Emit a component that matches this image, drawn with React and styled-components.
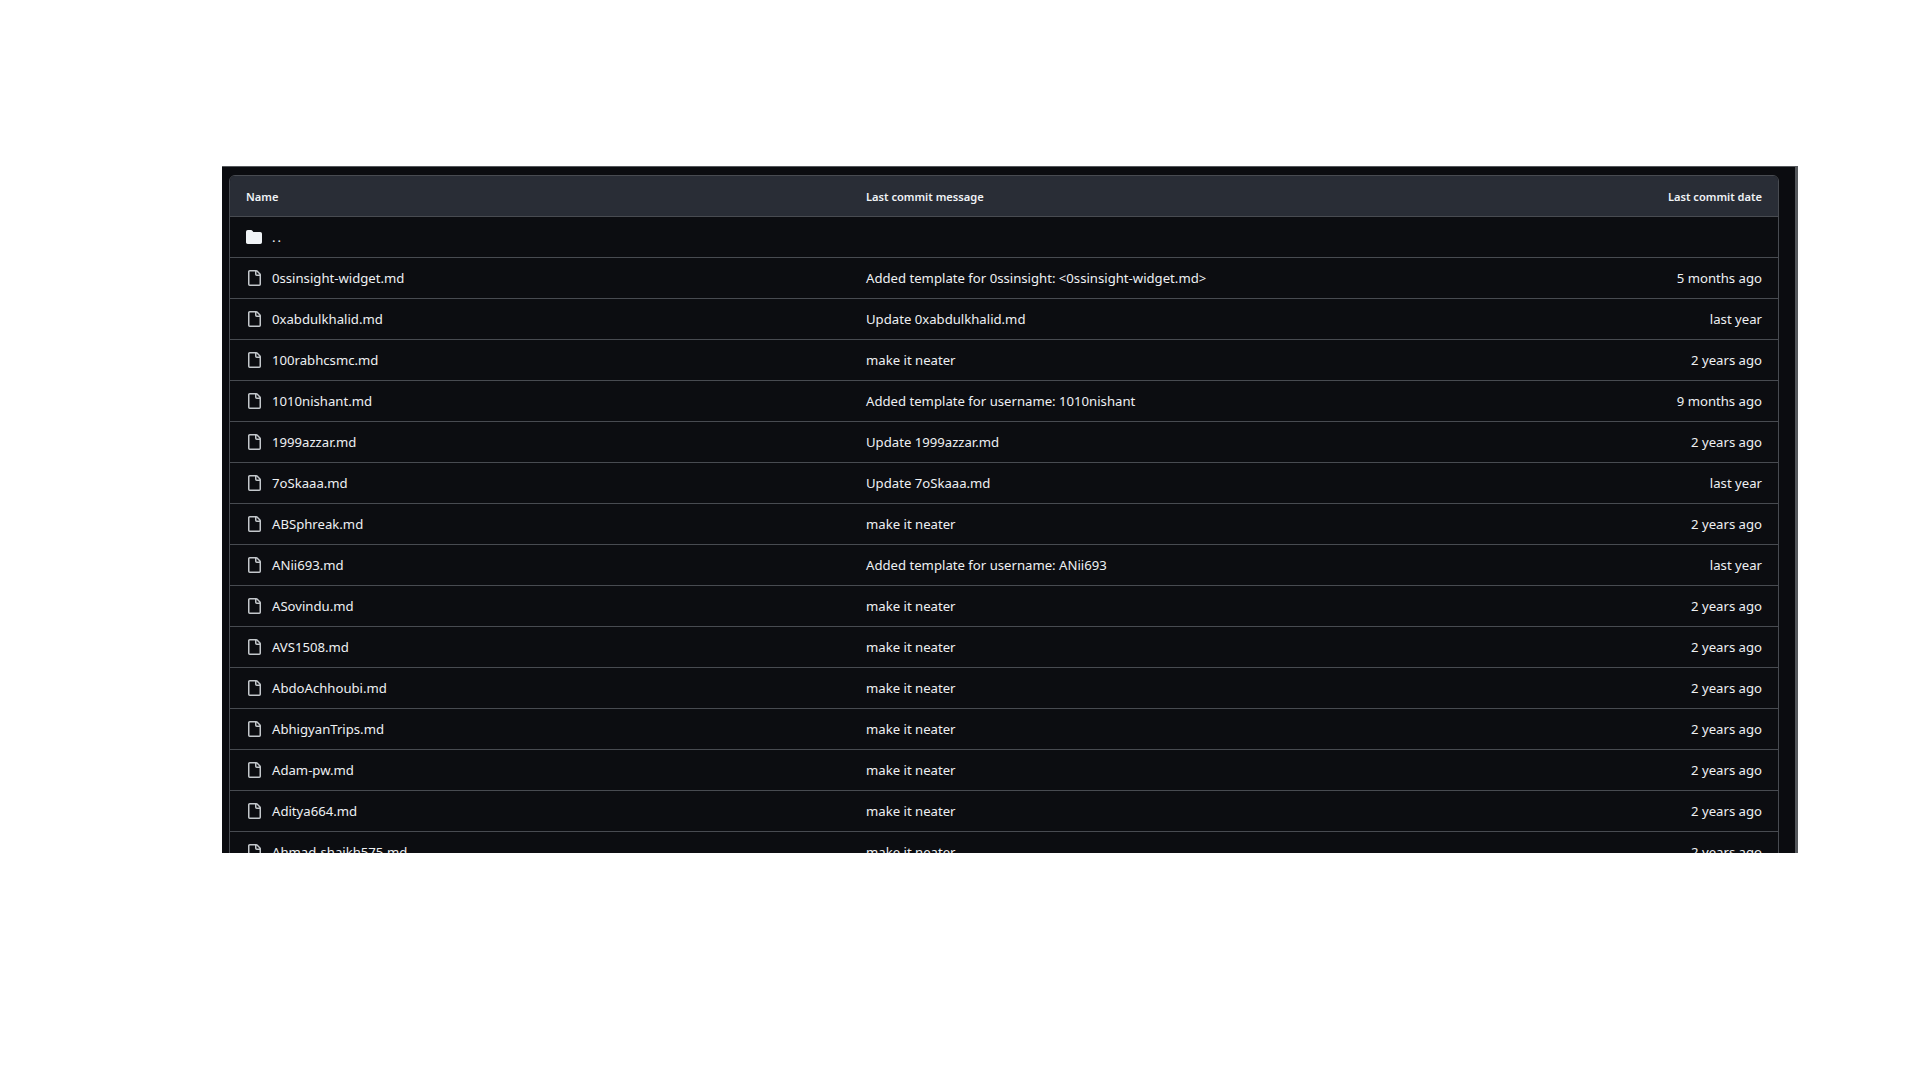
import React from "react";
import styled, { createGlobalStyle } from "styled-components";

const Global = createGlobalStyle`
  html, body { margin: 0; background: #fff; }
  body { font-family: "Noto Sans", "Open Sans", "Liberation Sans", sans-serif; }
`;

const Page = styled.div`
  width: 1920px;
  height: 1080px;
  padding: 166px 0 0 222px;
  box-sizing: border-box;
  overflow: hidden;
`;

const Frame = styled.div`
  width: 1576px;
  height: 687px;
  box-sizing: border-box;
  padding: 8px 16px 0 7px;
  background: #0b0c10;
  border-top: 1px solid #55585c;
  border-right: 3px solid #55585c;
  overflow: hidden;
`;

const Table = styled.div`
  border: 1px solid #484b51;
  border-radius: 6px;
  background: #0c0d11;
  color: #f0f3f6;
`;

const Row = styled.div`
  display: grid;
  grid-template-columns: 620px 1fr 200px;
  align-items: center;
  height: 41px;
  padding: 0 16px;
  box-sizing: border-box;
  border-top: 1px solid #484b51;
  font-size: 13.15px;
  color: #eef0f3;
`;

const HeadRow = styled(Row)`
  height: 40px;
  border-top: 0;
  border-radius: 5px 5px 0 0;
  background: #292d36;
  font-size: 11.1px;
  font-weight: 600;
  color: #f0f3f6;
`;

const NameCell = styled.div`
  display: flex;
  align-items: center;
  gap: 10px;
  white-space: nowrap;
`;

const Message = styled.div`
  white-space: nowrap;
`;

const DateCell = styled.div`
  text-align: right;
  white-space: nowrap;
`;

const Icon = styled.svg`
  width: 16px;
  height: 16px;
  flex: none;
  fill: ${(p) => p.$color};
`;

const UpLabel = styled.span`
  letter-spacing: 2px;
`;

const FileIcon = () => (
  <Icon viewBox="0 0 16 16" $color="#c4c8cc">
    <path d="M2 1.75C2 .784 2.784 0 3.75 0h6.586c.464 0 .909.184 1.237.513l2.914 2.914c.329.328.513.773.513 1.237v9.586A1.75 1.75 0 0 1 13.25 16h-9.5A1.75 1.75 0 0 1 2 14.25Zm1.75-.25a.25.25 0 0 0-.25.25v12.5c0 .138.112.25.25.25h9.5a.25.25 0 0 0 .25-.25V6h-2.75A1.75 1.75 0 0 1 9 4.25V1.5Zm6.75.062V4.25c0 .138.112.25.25.25h2.688l-.011-.013-2.914-2.914-.013-.011Z" />
  </Icon>
);

const FolderIcon = () => (
  <Icon viewBox="0 0 16 16" $color="#f0f3f6">
    <path d="M1.75 1A1.75 1.75 0 0 0 0 2.75v10.5C0 14.216.784 15 1.75 15h12.5A1.75 1.75 0 0 0 16 13.25v-8.5A1.75 1.75 0 0 0 14.25 3H7.5a.25.25 0 0 1-.2-.1l-.9-1.2C6.07 1.26 5.55 1 5 1H1.75Z" />
  </Icon>
);

const neat = "make it neater";
const files = [
  ["0ssinsight-widget.md", "Added template for 0ssinsight: <0ssinsight-widget.md>", "5 months ago"],
  ["0xabdulkhalid.md", "Update 0xabdulkhalid.md", "last year"],
  ["100rabhcsmc.md", neat, "2 years ago"],
  ["1010nishant.md", "Added template for username: 1010nishant", "9 months ago"],
  ["1999azzar.md", "Update 1999azzar.md", "2 years ago"],
  ["7oSkaaa.md", "Update 7oSkaaa.md", "last year"],
  ["ABSphreak.md", neat, "2 years ago"],
  ["ANii693.md", "Added template for username: ANii693", "last year"],
  ["ASovindu.md", neat, "2 years ago"],
  ["AVS1508.md", neat, "2 years ago"],
  ["AbdoAchhoubi.md", neat, "2 years ago"],
  ["AbhigyanTrips.md", neat, "2 years ago"],
  ["Adam-pw.md", neat, "2 years ago"],
  ["Aditya664.md", neat, "2 years ago"],
  ["Ahmad-shaikh575.md", neat, "2 years ago"],
];

export default function App() {
  return (
    <Page>
      <Global />
      <Frame>
        <Table>
          <HeadRow>
            <div>Name</div>
            <Message>Last commit message</Message>
            <DateCell>Last commit date</DateCell>
          </HeadRow>
          <Row>
            <NameCell>
              <FolderIcon />
              <UpLabel>..</UpLabel>
            </NameCell>
          </Row>
          {files.map(([name, msg, date]) => (
            <Row key={name}>
              <NameCell>
                <FileIcon />
                {name}
              </NameCell>
              <Message>{msg}</Message>
              <DateCell>{date}</DateCell>
            </Row>
          ))}
        </Table>
      </Frame>
    </Page>
  );
}
